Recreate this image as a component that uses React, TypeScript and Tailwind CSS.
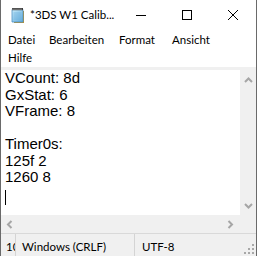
import React from "react";

const ui = { fontFamily: 'Lato, "Noto Sans", sans-serif' };
const mono = { fontFamily: '"Liberation Sans", Arial, sans-serif' };

function NotepadIcon() {
  return (
    <svg width="16" height="17" viewBox="0 0 16 17">
      <defs>
        <linearGradient id="np" x1="0" y1="0" x2="1" y2="1">
          <stop offset="0" stopColor="#c9ecfb" />
          <stop offset="1" stopColor="#5ea9da" />
        </linearGradient>
      </defs>
      <path d="M4 4 H14 V16 H4 Z" fill="#b8902f" />
      <path d="M2 2.5 H13 V15 H2 Z" fill="url(#np)" stroke="#4b8fc4" strokeWidth="0.8" />
      <path d="M3.5 6 H11.5 M3.5 8 H11.5 M3.5 10 H11.5 M3.5 12 H11.5" stroke="#6fb0dc" strokeWidth="0.7" />
      <rect x="2" y="1" width="11" height="2.2" fill="#3a3a3a" />
      <path d="M3 1.5 V3 M5 1.5 V3 M7 1.5 V3 M9 1.5 V3 M11 1.5 V3" stroke="#cfcfcf" strokeWidth="0.7" />
    </svg>
  );
}

function Chevron({ dir }: { dir: "up" | "down" | "left" | "right" }) {
  const d =
    dir === "up"
      ? "M1 6 L4.5 2.5 L8 6"
      : dir === "down"
      ? "M1 2 L4.5 5.5 L8 2"
      : dir === "left"
      ? "M5.5 1 L2 4.5 L5.5 8"
      : "M2.5 1 L6 4.5 L2.5 8";
  return (
    <svg width="9" height="9" viewBox="0 0 9 9">
      <path d={d} fill="none" stroke="#a6a6a6" strokeWidth="2" />
    </svg>
  );
}

export default function App() {
  const lines = ["VCount: 8d", "GxStat: 6", "VFrame: 8", "", "Timer0s:", "125f 2", "1260 8"];
  return (
    <div className="w-[257px] h-[256px] overflow-hidden bg-white border-l border-r border-[#6a6a6a] flex flex-col relative">
      {/* Title bar */}
      <div className="h-[30px] flex items-center shrink-0" style={ui}>
        <div className="pl-[9px] pr-[4px] pt-[1px] flex items-center">
          <NotepadIcon />
        </div>
        <div className="flex-1 text-[11.5px] text-black whitespace-nowrap">*3DS W1 Calib...</div>
        <div className="w-[46px] h-[30px] flex items-center justify-center">
          <svg width="10" height="10" viewBox="0 0 10 10">
            <path d="M0 5.5 H10" stroke="#000" strokeWidth="1" />
          </svg>
        </div>
        <div className="w-[46px] h-[30px] flex items-center justify-center">
          <svg width="10" height="10" viewBox="0 0 10 10">
            <rect x="0.5" y="0.5" width="9" height="9" fill="none" stroke="#000" strokeWidth="1" />
          </svg>
        </div>
        <div className="w-[46px] h-[30px] flex items-center justify-center">
          <svg width="10" height="10" viewBox="0 0 10 10">
            <path d="M0 0 L10 10 M10 0 L0 10" stroke="#000" strokeWidth="1" />
          </svg>
        </div>
      </div>

      {/* Menu */}
      <div className="flex flex-wrap pt-[1px] text-[11.5px] text-black shrink-0" style={ui}>
        <div className="w-[41px] h-[18px] pl-[7px] leading-[18px]">Datei</div>
        <div className="w-[70px] h-[18px] pl-[7px] leading-[18px]">Bearbeiten</div>
        <div className="w-[53px] h-[18px] pl-[7px] leading-[18px]">Format</div>
        <div className="w-[60px] h-[18px] pl-[7px] leading-[18px]">Ansicht</div>
        <div className="w-[41px] h-[18px] pl-[7px] leading-[18px]">Hilfe</div>
      </div>
      <div className="h-[3px] bg-[#f0f0f0] shrink-0" />

      {/* Edit area */}
      <div className="grid grid-cols-[239px_16px] grid-rows-[145px_18px] shrink-0">
        <div className="bg-white pl-[4px] text-[15px] leading-[16.5px] text-black overflow-hidden" style={mono}>
          {lines.map((l, i) => (
            <div key={i} className="h-[16.5px] whitespace-pre">
              {l}
            </div>
          ))}
          <div className="h-[16.5px]">
            <div className="w-px h-[15px] bg-black mt-[4px]" />
          </div>
        </div>
        <div className="bg-[#f0f0f0] flex flex-col items-center justify-between pt-[6px] pb-[4px]">
          <Chevron dir="up" />
          <Chevron dir="down" />
        </div>
        <div className="bg-[#f0f0f0] flex items-center justify-between pl-[5px] pr-[5px]">
          <Chevron dir="left" />
          <Chevron dir="right" />
        </div>
        <div className="bg-[#f0f0f0]" />
      </div>

      {/* Status bar */}
      <div className="flex-1 bg-[#f0f0f0] border-t border-[#d9d9d9] flex text-[11.5px] text-black relative" style={ui}>
        <div className="w-[15px] overflow-hidden whitespace-nowrap pl-[5px] pt-[4px] border-r border-[#d4d4d4]">100%</div>
        <div className="w-[119px] whitespace-nowrap pl-[6px] pt-[4px] border-r border-[#d4d4d4]">Windows (CRLF)</div>
        <div className="flex-1 whitespace-nowrap pl-[7px] pt-[4px]">UTF-8</div>
        <svg className="absolute right-[1px] bottom-[1px]" width="11" height="11" viewBox="0 0 11 11">
          <rect x="8" y="0" width="2" height="2" fill="#a8a8a8" />
          <rect x="4" y="4" width="2" height="2" fill="#a8a8a8" />
          <rect x="8" y="4" width="2" height="2" fill="#a8a8a8" />
          <rect x="0" y="8" width="2" height="2" fill="#a8a8a8" />
          <rect x="4" y="8" width="2" height="2" fill="#a8a8a8" />
          <rect x="8" y="8" width="2" height="2" fill="#a8a8a8" />
        </svg>
      </div>
    </div>
  );
}
